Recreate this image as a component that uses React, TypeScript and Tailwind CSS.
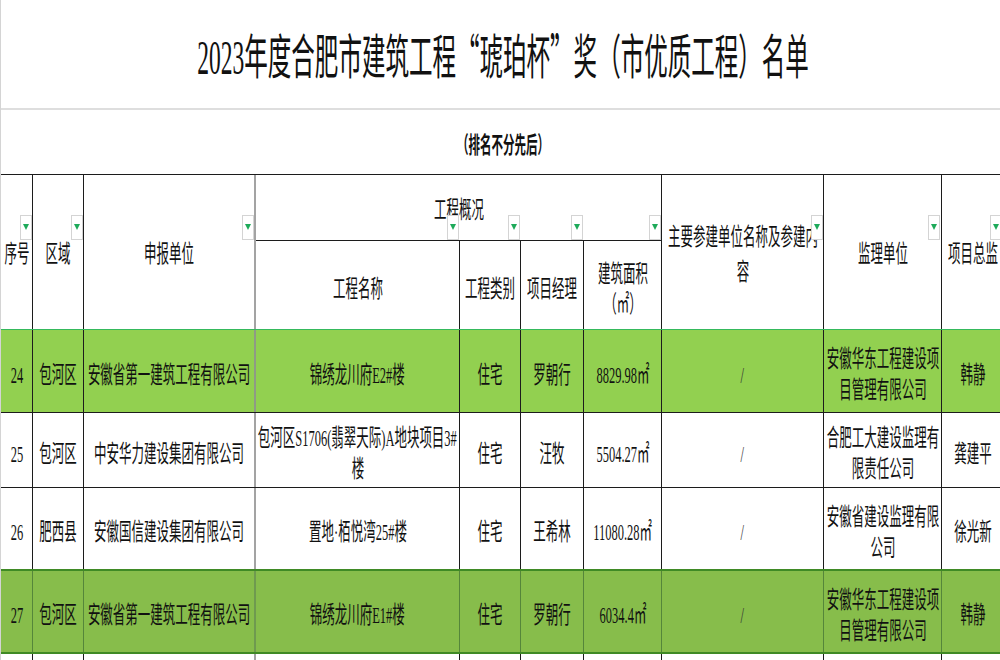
import clsx from 'clsx'

type Row = {
  no: string
  area: string
  unit: string
  name: string[]
  kind: string
  pm: string
  size: string
  sup: string[]
  chief: string
}

const rows: Row[] = [
  {
    no: '24',
    area: '包河区',
    unit: '安徽省第一建筑工程有限公司',
    name: ['锦绣龙川府E2#楼'],
    kind: '住宅',
    pm: '罗朝行',
    size: '8829.98㎡',
    sup: ['安徽华东工程建设项', '目管理有限公司'],
    chief: '韩静',
  },
  {
    no: '25',
    area: '包河区',
    unit: '中安华力建设集团有限公司',
    name: ['包河区S1706(翡翠天际)A地块项目3#', '楼'],
    kind: '住宅',
    pm: '汪牧',
    size: '5504.27㎡',
    sup: ['合肥工大建设监理有', '限责任公司'],
    chief: '龚建平',
  },
  {
    no: '26',
    area: '肥西县',
    unit: '安徽国信建设集团有限公司',
    name: ['置地·栢悦湾25#楼'],
    kind: '住宅',
    pm: '王希林',
    size: '11080.28㎡',
    sup: ['安徽省建设监理有限', '公司'],
    chief: '徐光新',
  },
  {
    no: '27',
    area: '包河区',
    unit: '安徽省第一建筑工程有限公司',
    name: ['锦绣龙川府E1#楼'],
    kind: '住宅',
    pm: '罗朝行',
    size: '6034.4㎡',
    sup: ['安徽华东工程建设项', '目管理有限公司'],
    chief: '韩静',
  },
]

const rowStyles = [
  { box: 'h-[84px] border-y border-t-[#35b95c] border-b-[#1c1c1c] bg-[#92d050]', line: 'border-[#1c1c1c]', gray: 'border-[#8f9a86]' },
  { box: 'h-[75px] border-b border-[#1c1c1c] bg-white', line: 'border-[#1c1c1c]', gray: 'border-[#a3a3a3]' },
  { box: 'h-[81px] bg-white', line: 'border-[#1c1c1c]', gray: 'border-[#a3a3a3]' },
  { box: 'h-[85px] border-y-2 border-[#3f8a25] bg-[#87bd4b]', line: 'border-[#55863a]', gray: 'border-[#6f9a4f]' },
]

const grid = 'grid grid-cols-[32px_51px_172px_204px_61px_63px_78px_162px_118px_62px]'

const filters = [
  'left-[19px]',
  'left-[70px]',
  'left-[241px]',
  'left-[446px]',
  'left-[507px]',
  'left-[570px]',
  'left-[648px]',
  'left-[810px]',
  'left-[927px]',
  'left-[989px]',
]

function Lines({ lines, lead = 'leading-[31px]' }: { lines: string[]; lead?: string }) {
  return (
    <>
      {lines.map((t, i) => (
        <span key={i} className={clsx('whitespace-nowrap text-[24px] scale-x-[0.52]', lead)}>
          {t}
        </span>
      ))}
    </>
  )
}

function Cell({ lines, border, className, lead }: { lines: string[]; border: string; className?: string; lead?: string }) {
  return (
    <div className={clsx('flex flex-col items-center justify-center pt-2', border, className)}>
      <Lines lines={lines} lead={lead} />
    </div>
  )
}

function Filter({ pos }: { pos: string }) {
  return (
    <div className={clsx('absolute top-[40px] z-10 flex h-[25px] w-[12px] justify-center border border-[#d4d4d4] bg-white pt-[8px]', pos)}>
      <div className="h-0 w-0 border-x-[3px] border-t-[6px] border-x-transparent border-t-[#1eaa5a]" />
    </div>
  )
}

export default function App() {
  return (
    <div className="h-[660px] w-[1000px] overflow-hidden bg-white font-['Liberation_Serif','Noto_Sans_CJK_SC',serif] text-[#111]">
      <div className="flex h-[660px] w-[1005px] flex-col border-l border-[#d4d4d4]">
        <div className="flex h-[110px] shrink-0 items-center justify-center border-b-2 border-[#dedede] pt-[3px]">
          <span className="whitespace-nowrap text-[48px] leading-none scale-x-[0.49]">
            2023年度合肥市建筑工程<span className="font-['Noto_Sans_CJK_SC']">“</span>琥珀杯
            <span className="font-['Noto_Sans_CJK_SC']">”</span>奖（市优质工程）名单
          </span>
        </div>

        <div className="flex h-[64px] shrink-0 items-center justify-center pt-[6px]">
          <span className="whitespace-nowrap text-[23px] font-bold leading-none scale-x-[0.5]">（排名不分先后）</span>
        </div>

        <div className={clsx(grid, 'relative h-[155px] shrink-0 grid-rows-[66px_88px] border-t border-[#1c1c1c]')}>
          <Cell lines={['序号']} border="row-span-2 border-r border-[#1c1c1c]" className="pt-[5px]" />
          <Cell lines={['区域']} border="row-span-2 border-r border-[#1c1c1c]" className="pt-[5px]" />
          <Cell lines={['申报单位']} border="row-span-2 border-r-2 border-[#a3a3a3]" className="pt-[5px]" />
          <Cell lines={['工程概况']} border="col-span-4 border-r border-b border-[#1c1c1c]" className="pt-[5px]" />
          <Cell
            lines={['主要参建单位名称及参建内', '容']}
            border="row-span-2 border-r border-[#1c1c1c]"
            className="pt-[5px]"
            lead="leading-[35px]"
          />
          <Cell lines={['监理单位']} border="row-span-2 border-r border-[#1c1c1c]" className="pt-[5px]" />
          <Cell lines={['项目总监']} border="row-span-2 border-r border-[#1c1c1c]" className="pt-[5px]" />
          <Cell lines={['工程名称']} border="border-r border-[#1c1c1c]" />
          <Cell lines={['工程类别']} border="border-r border-[#1c1c1c]" />
          <Cell lines={['项目经理']} border="border-r border-[#1c1c1c]" />
          <Cell lines={['建筑面积', '（㎡）']} border="border-r border-[#1c1c1c]" lead="leading-[30px]" />
          {filters.map((p) => (
            <Filter key={p} pos={p} />
          ))}
        </div>

        {rows.map((r, i) => {
          const s = rowStyles[i]
          const b = clsx('border-r', s.line)
          return (
            <div key={r.no} className={clsx(grid, 'shrink-0', s.box)}>
              <Cell lines={[r.no]} border={b} />
              <Cell lines={[r.area]} border={b} />
              <Cell lines={[r.unit]} border={clsx('border-r-2', s.gray)} />
              <Cell lines={r.name} border={b} />
              <Cell lines={[r.kind]} border={b} />
              <Cell lines={[r.pm]} border={b} />
              <Cell lines={[r.size]} border={b} />
              <div className={clsx('flex items-center justify-center pt-2', b)}>
                <span className="text-[24px] leading-[31px] text-[#333] scale-x-[0.52]">/</span>
              </div>
              <Cell lines={r.sup} border={b} />
              <Cell lines={[r.chief]} border={b} />
            </div>
          )
        })}

        <div className={clsx(grid, 'flex-1')}>
          <div className="border-r border-[#1c1c1c]" />
          <div className="border-r border-[#1c1c1c]" />
          <div className="border-r-2 border-[#a3a3a3]" />
          <div className="border-r border-[#1c1c1c]" />
          <div className="border-r border-[#1c1c1c]" />
          <div className="border-r border-[#1c1c1c]" />
          <div className="border-r border-[#1c1c1c]" />
          <div className="border-r border-[#1c1c1c]" />
          <div className="border-r border-[#1c1c1c]" />
          <div className="border-r border-[#1c1c1c]" />
        </div>
      </div>
    </div>
  )
}
